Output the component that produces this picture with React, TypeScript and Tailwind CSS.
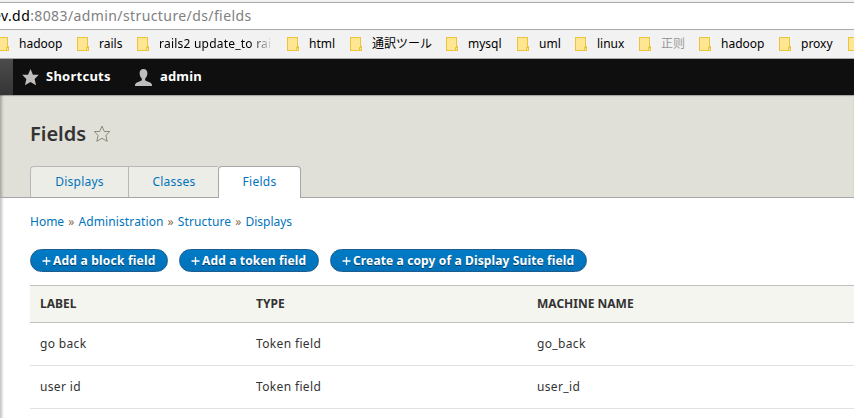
import React from "react";

const bookmarks = [
  { label: "hadoop", box: "w-[80px]", tone: "text-black" },
  { label: "rails", box: "w-[60px]", tone: "text-black" },
  { label: "rails2 update_to rai", box: "w-[150px]", tone: "w-[114px] overflow-hidden tracking-[0.22px] bg-[linear-gradient(to_right,#000_80%,transparent)] bg-clip-text text-transparent" },
  { label: "html", box: "w-[63px]", tone: "text-black" },
  { label: "通訳ツール", box: "w-[96px]", tone: "text-black" },
  { label: "mysql", box: "w-[71px]", tone: "text-black" },
  { label: "uml", box: "w-[58px]", tone: "text-black" },
  { label: "linux", box: "w-[64px]", tone: "text-black" },
  { label: "正则", box: "w-[60px]", tone: "text-[#999]" },
  { label: "hadoop", box: "w-[80px]", tone: "text-black" },
  { label: "proxy", box: "w-[69px]", tone: "text-black" },
  { label: "", box: "w-[30px]", tone: "text-black" },
];

const rows = [
  ["go back", "Token field", "go_back"],
  ["user id", "Token field", "user_id"],
];

const STAR = "M8 0 10.300 5.500H15.800L11.900 9.400 13.200 15.300 8 12.300 2.800 15.300 4.100 9.400.2 5.500H5.700z";

function Folder() {
  return (
    <svg className="h-[14px] w-[12px] shrink-0" viewBox="0 0 12 14" shapeRendering="crispEdges">
      <path d="M.5.5h10v9h1v4H.5z" fill="#ffe791" stroke="#ebc43f" />
      <path d="M9.5 13.5v-3.500h2v3.500z" fill="#ffe791" stroke="#ebc43f" />
    </svg>
  );
}

function Action({ label, size }: { label: string; size: string }) {
  return (
    <button className={`flex h-[23px] items-center rounded-full border border-[#1e5c90] bg-linear-to-b from-[#007bc6] to-[#0071b8] pl-[11px] text-[12px] font-bold whitespace-nowrap text-white [text-shadow:0_1px_rgba(0,0,0,0.5)] ${size}`}>
      <svg className="mr-[2px] h-[9px] w-[9px]" viewBox="0 0 9 9">
        <path d="M.5 5h8M4.500 1v8" stroke="#fff" strokeWidth="1.300" />
      </svg>
      {label}
    </button>
  );
}

export default function App() {
  return (
    <div className="flex h-[418px] w-[854px] flex-col overflow-hidden bg-white font-['Noto_Sans','Noto_Sans_CJK_JP',sans-serif] text-[12px] text-[#333]">
      <div className="h-[3px] shrink-0 border-b border-[#a9a9a9] bg-[#f2f2f2]" />
      <div className="flex h-[27px] shrink-0 items-center border-b border-[#a9a9a9] bg-white pb-px text-[14px] whitespace-nowrap text-[#808080]">
        <span className="-ml-[7px] tracking-[0.4px]"><span className="text-black">ev.dd</span>:8083/admin/structure/ds/fields</span>
      </div>
      <div className="flex h-[29px] shrink-0 items-center border-b border-[#aaa] bg-[#f2f2f2]">
        <div className="-ml-[3px] flex">
          {bookmarks.map((b, i) => (
            <div key={i} className={`flex h-4 shrink-0 items-center gap-[10px] whitespace-nowrap ${b.box}`}>
              <Folder />
              <span className={b.tone}>{b.label}</span>
            </div>
          ))}
        </div>
      </div>
      <nav className="flex h-[36px] shrink-0 items-center bg-[#0f0f0f] text-[13px] font-bold text-white">
        <div className="h-full w-[13px] bg-linear-to-b from-[#4c4c4c] to-[#353535]" />
        <svg className="ml-[9px] h-[17px] w-[17px]" viewBox="0 0 16 16"><path d={STAR} fill="#bebebe" /></svg>
        <span className="ml-[7px] w-[89px] tracking-[0.25px]">Shortcuts</span>
        <svg className="h-[17px] w-[17px]" viewBox="0 0 17 17">
          <path d="M8.500 0C6 0 4.600 1.700 4.600 4.200c0 2 .9 4 2 5.100.5.8.4 2-.4 2.500L2 13.600C.6 14.200 0 15 0 17h17c0-2-.6-2.800-2-3.400l-4.200-1.800c-.8-.5-.9-1.700-.4-2.500 1.100-1.100 2-3.100 2-5.100C12.400 1.700 11 0 8.500 0z" fill="#bebebe" />
        </svg>
        <span className="ml-[8px] tracking-[0.15px]">admin</span>
      </nav>
      <div className="flex min-h-0 flex-1 flex-col bg-[linear-gradient(to_right,rgba(0,0,0,0.24),transparent_4px)]">
        <header className="flex h-[103px] shrink-0 flex-col border-b border-[#a6a6a6] bg-[#e0dfd8] bg-[linear-gradient(to_right,rgba(0,0,0,0.24),transparent_4px)] pl-[30px] shadow-[inset_0_1px_1px_rgba(0,0,0,0.28)]">
          <div className="flex h-[71px] items-center pt-[7px]">
            <h1 className="text-[20px] font-semibold">Fields</h1>
            <svg className="ml-[8px] h-[16px] w-[16px] overflow-visible" viewBox="0 0 16 16"><path d={STAR} fill="none" stroke="#8b8b7b" strokeWidth="1" strokeLinejoin="round" /></svg>
          </div>
          <div className="mt-px -mb-px flex h-[32px] text-[#0074bd]">
            <a className="mb-px flex w-[98px] items-center justify-center rounded-tl-[4px] border-t border-l border-[#b8b8b8] bg-[#ecede7] tracking-[0.25px]">Displays</a>
            <a className="mb-px flex w-[90px] items-center justify-center border-t border-l border-[#b8b8b8] bg-[#ecede7] pl-px tracking-[0.25px]">Classes</a>
            <a className="flex w-[83px] items-center justify-center rounded-t-[4px] border border-b-0 border-[#a6a6a6] bg-white pb-px tracking-[0.25px]">Fields</a>
          </div>
        </header>
        <main className="pl-[30px]">
          <div className="flex h-[51px] items-center gap-[4px] pb-[3px] tracking-[0.12px] text-[#0074bd]">
            <a className="tracking-normal">Home</a><i className="text-[#8a6d4d] not-italic">»</i>
            <a>Administration</a><i className="text-[#8a6d4d] not-italic">»</i>
            <a>Structure</a><i className="text-[#8a6d4d] not-italic">»</i>
            <a className="tracking-normal">Displays</a>
          </div>
          <div className="flex gap-[11px]">
            <Action label="Add a block field" size="w-[138px] tracking-[0.22px]" />
            <Action label="Add a token field" size="w-[140px] tracking-[0.15px]" />
            <Action label="Create a copy of a Display Suite field" size="w-[257px] tracking-[0.13px]" />
          </div>
          <div className="mt-[13px] grid h-[38px] grid-cols-[216px_281px_1fr] items-center border-y border-[#bfbfba] bg-[#f5f5f0] font-bold">
            <span className="pl-[10px]">LABEL</span><span className="pl-[10px]">TYPE</span><span className="pl-[10px]">MACHINE NAME</span>
          </div>
          {rows.map((row) => (
            <div key={row[0]} className="grid h-[43px] grid-cols-[216px_281px_1fr] items-center border-b border-[#e2e2de]">
              {row.map((cell) => <span key={cell} className="pl-[10px] tracking-[0.35px]">{cell}</span>)}
            </div>
          ))}
        </main>
      </div>
    </div>
  );
}
